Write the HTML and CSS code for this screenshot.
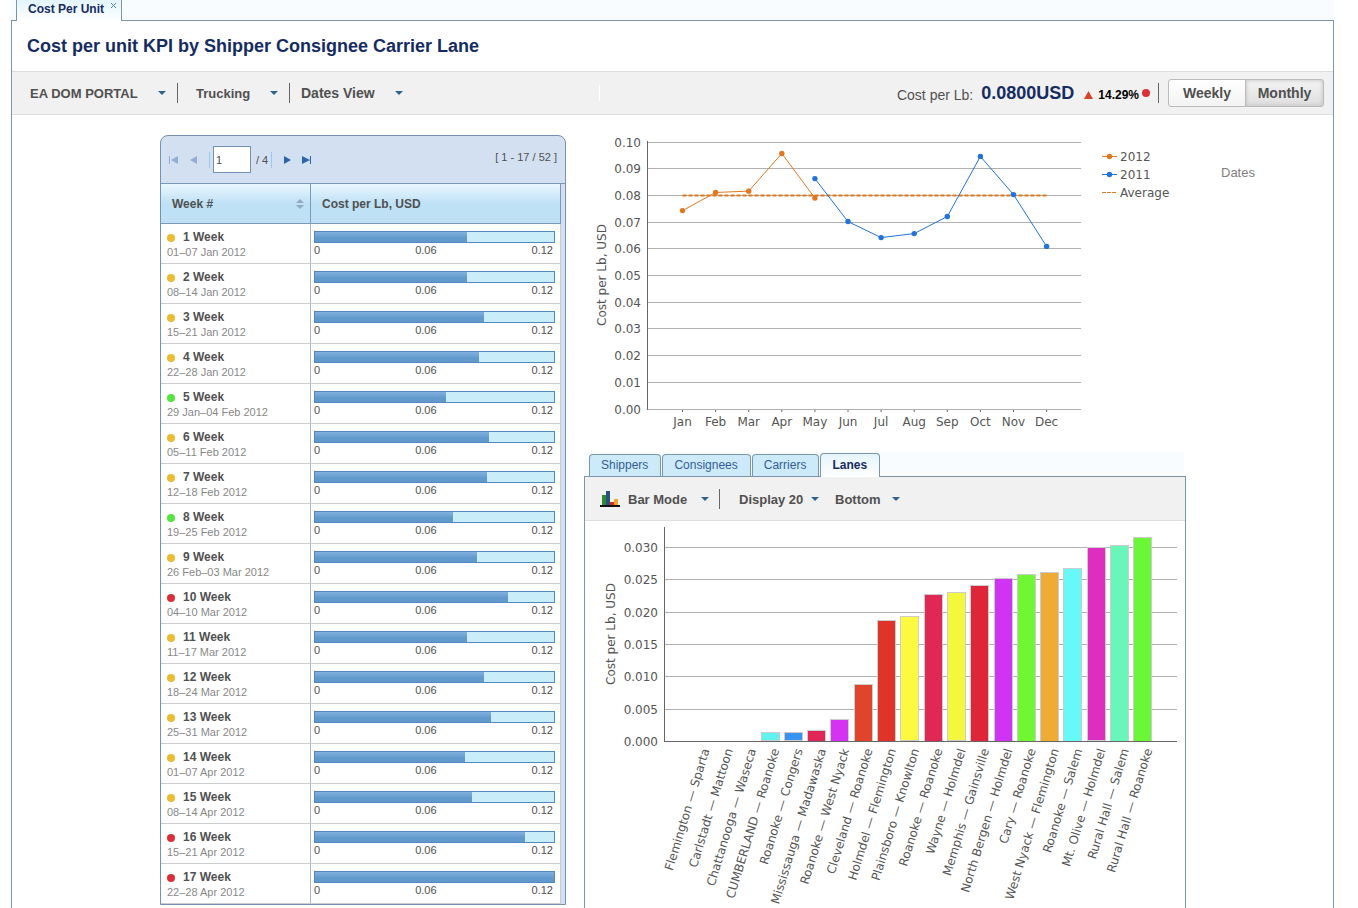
FILE: index.html
```html
<!DOCTYPE html>
<html lang="en">
<head>
<meta charset="utf-8">
<title>Cost Per Unit</title>
<link rel="stylesheet" href="styles.css">
</head>
<body>
<div class="app">
  <nav class="page-tabs" aria-label="Open pages">
    <div class="page-tab">
      <a class="page-tab-link" href="#cost">Cost Per Unit</a>
      <button class="page-tab-close" type="button" aria-label="Close tab"><svg width="7" height="7" viewBox="0 0 7 7"><path d="M1 1L6 6M6 1L1 6"/></svg></button>
    </div>
  </nav>

  <main class="page" id="cost">
    <h1 class="page-title">Cost per unit KPI by Shipper Consignee Carrier Lane</h1>

    <div class="toolbar">
      <label class="dropdown dropdown-portal"><select aria-label="Portal"><option>EA DOM PORTAL</option></select></label>
      <span class="divider"></span>
      <label class="dropdown dropdown-mode"><select aria-label="Mode"><option>Trucking</option></select></label>
      <span class="divider"></span>
      <label class="dropdown dropdown-dates"><select aria-label="View"><option>Dates View</option></select></label>
      <span class="divider divider-light"></span>
      <div class="kpi">
        <span class="kpi-label">Cost per Lb:</span>
        <strong class="kpi-value">0.0800USD</strong>
        <svg class="kpi-arrow" width="9" height="8" viewBox="0 0 9 8"><path d="M4.500 0L9 8H0Z"/></svg>
        <span class="kpi-change">14.29%</span>
        <span class="dot dot-red"></span>
      </div>
      <span class="divider"></span>
      <div class="period">
        <button class="period-button" type="button">Weekly</button>
        <button class="period-button period-active" type="button" aria-pressed="true">Monthly</button>
      </div>
    </div>

    <div class="content">
      <section class="weeks">
        <div class="pager">
          <button class="pager-button pager-off" type="button" aria-label="First page"><svg width="10" height="8" viewBox="0 0 10 8"><path d="M0 0H1V8H0ZM9 0V8L2 4Z"/></svg></button>
          <button class="pager-button pager-off" type="button" aria-label="Previous page"><svg width="8" height="8" viewBox="0 0 8 8"><path d="M7 0V8L0 4Z"/></svg></button>
          <span class="pager-line"></span>
          <input class="pager-input" type="text" value="1" aria-label="Page">
          <span class="pager-total">/ 4</span>
          <span class="pager-line"></span>
          <button class="pager-button" type="button" aria-label="Next page"><svg width="8" height="8" viewBox="0 0 8 8"><path d="M1 0V8L8 4Z"/></svg></button>
          <button class="pager-button" type="button" aria-label="Last page"><svg width="10" height="8" viewBox="0 0 10 8"><path d="M0 0V8L8 4ZM8 0H9V8H8Z"/></svg></button>
          <span class="pager-range">[ 1 - 17 / 52 ]</span>
        </div>
        <div class="weeks-body">
          <table class="weeks-table">
            <thead>
              <tr>
                <th class="col-week" scope="col"><div class="th-inner">Week #<svg class="sort" width="8" height="10" viewBox="0 0 8 10"><path d="M4 0L8 4H0ZM4 10L8 6H0Z"/></svg></div></th>
                <th scope="col">Cost per Lb, USD</th>
              </tr>
            </thead>
            <tbody id="weeks-rows"></tbody>
          </table>
        </div>
      </section>

      <div class="charts">
        <svg class="chart" id="line-chart" viewBox="0 0 602 306" role="img" aria-label="Cost per Lb by month"></svg>

        <section class="lanes">
          <nav class="lane-tabs">
            <a class="lane-tab" href="#shippers">Shippers</a>
            <a class="lane-tab" href="#consignees">Consignees</a>
            <a class="lane-tab" href="#carriers">Carriers</a>
            <a class="lane-tab lane-tab-active" href="#lanes">Lanes</a>
          </nav>
          <div class="lane-panel" id="lanes">
            <div class="lane-toolbar">
              <svg class="bar-icon" width="20" height="17" viewBox="0 0 20 17"><path fill="#2f8a2f" d="M2 4H6V14H2Z"/><path fill="#24517f" d="M6 0H10V14H6Z"/><path fill="#d8262c" d="M10 11H14V14H10Z"/><path fill="#eda52c" d="M14 8H18V14H14Z"/><path fill="#111" d="M0 14H20V16H0Z"/></svg>
              <label class="dropdown dropdown-bar"><select aria-label="Chart mode"><option>Bar Mode</option></select></label>
              <span class="divider"></span>
              <label class="dropdown dropdown-display"><select aria-label="Display count"><option>Display 20</option></select></label>
              <label class="dropdown dropdown-order"><select aria-label="Order"><option>Bottom</option></select></label>
            </div>
            <svg class="chart" id="bar-chart" viewBox="0 0 600 410" role="img" aria-label="Cost per Lb by lane"></svg>
          </div>
        </section>
      </div>

      <aside class="dates">Dates</aside>
    </div>
  </main>
</div>
<script src="script.js"></script>
</body>
</html>
```
FILE: styles.css
```css
* { box-sizing: border-box; }

body {
  margin: 0;
  height: 100vh;
  overflow: hidden;
  background: #fff;
  color: #505050;
  font-family: "Liberation Sans", Arial, sans-serif;
  font-size: 12px;
}

a { color: inherit; text-decoration: none; }

button, input, select {
  margin: 0;
  padding: 0;
  border: 0;
  background: none;
  color: inherit;
  font: inherit;
}

.app { padding: 0 24px 0 11px; }

.page-tabs {
  display: flex;
  height: 20px;
  padding-left: 5px;
  background: #f8fcfe;
}

.page-tab {
  display: flex;
  gap: 6px;
  height: 21px;
  padding: 0 4px 0 11px;
  border: solid #7b96a8;
  border-width: 0 1px;
  background: linear-gradient(#e2f4fd, #fff);
  z-index: 1;
}

.page-tab-link { color: #152c62; font-weight: bold; line-height: 18px; }
.page-tab-close { display: flex; padding-top: 2px; height: 12px; }
.page-tab-close path { stroke: #4f83ad; fill: none; }

.page {
  min-height: 100vh;
  border: 1px solid #7b96a8;
}

.page-title {
  margin: 0;
  padding: 1px 15px 0;
  color: #152c62;
  font-size: 18px;
  line-height: 49px;
}

.toolbar {
  display: flex;
  align-items: center;
  height: 44px;
  padding: 0 9px 0 18px;
  border: solid #dcdfe1;
  border-width: 1px 0;
  background: #f1f1f1;
}

.divider { width: 1px; height: 20px; background: #666; }
.divider-light { height: 16px; margin-left: 196px; background: #fff; }

.dropdown {
  display: flex;
  align-items: center;
  justify-content: space-between;
  font-size: 13px;
  font-weight: bold;
}

.dropdown select { appearance: none; outline-offset: 2px; }

.dropdown::after {
  content: "";
  border: 4px solid transparent;
  border-top-color: #2a6592;
  border-bottom: 0;
}

.dropdown-portal { width: 136px; margin-right: 11px; }
.dropdown-mode { width: 82px; margin: 0 11px 0 18px; }
.dropdown-dates { width: 102px; margin-left: 11px; font-size: 14px; }

.kpi {
  display: flex;
  align-items: center;
  gap: 8px;
  margin: 0 8px 0 auto;
}

.kpi-label { font-size: 14px; padding-top: 4px; }
.kpi-value { color: #152c62; font-size: 18px; }
.kpi-arrow { fill: #d8422a; margin: 3px -3px 0 2px; }
.kpi-change { margin-right: -5px; padding-top: 4px; color: #000; font-weight: bold; }

.dot { width: 8px; height: 8px; border-radius: 50%; flex: none; }
.dot-red { background: #dc3038; }
.dot-yellow { background: #edba34; }
.dot-green { background: #56e43e; }

.period { display: flex; margin-left: 9px; }

.period-button {
  height: 28px;
  width: 78px;
  border: 1px solid #bbb;
  border-radius: 3px 0 0 3px;
  background: linear-gradient(#fff, #f3f3f3);
  font-size: 14px;
  font-weight: bold;
}

.period-active {
  margin-left: -1px;
  width: 79px;
  border-radius: 0 3px 3px 0;
  background: linear-gradient(#f4f4f4, #dedede);
  box-shadow: inset 0 0 4px #bbb;
}

.content {
  display: grid;
  grid-template-columns: 406fr 18fr 602fr 35fr 112fr;
  align-items: start;
  padding: 15px 0 0 148px;
}

.weeks {
  grid-column: 1;
  margin-top: 5px;
  border: 1px solid #7590b0;
  border-radius: 8px 8px 0 0;
  background: #d3e0f1;
}

.pager {
  display: flex;
  align-items: center;
  height: 48px;
  padding: 0 8px;
  border-bottom: 1px solid #7d99b8;
  font-size: 11px;
}

.pager-button { display: flex; margin-right: 11px; fill: #2a66ae; }
.pager-off { fill: #8fb0d4; }
.pager-line { width: 1px; height: 16px; background: #8ecdf0; }

.pager-input {
  width: 38px;
  height: 27px;
  margin: 0 5px 0 3px;
  padding-left: 2px;
  border: 1px solid #7590b0;
  background: #fff;
}

.pager-total { margin-right: 3px; }
.pager-total + .pager-line { margin-right: 11px; }
.pager-range { margin-left: auto; padding-bottom: 6px; }

.weeks-body { padding-right: 4px; }

.weeks-table {
  width: 100%;
  table-layout: fixed;
  border-collapse: separate;
  border-spacing: 0;
  background: #fff;
}

.weeks-table th {
  height: 40px;
  padding: 0 6px 0 11px;
  border: solid #7d99b8;
  border-width: 0 1px 1px 0;
  background: linear-gradient(#e9f7fe, #bfe1f6 50%, #bfe1f6);
  text-align: left;
}

.weeks-table .col-week { width: 150px; }
.th-inner { display: flex; justify-content: space-between; align-items: center; }
.sort { fill: #94aac4; }

.weeks-table td {
  height: 40px;
  padding: 0 5px 0 3px;
  border: solid #c9cdd0;
  border-width: 0 1px 1px 0;
  vertical-align: top;
}

.weeks-table td:first-child { padding: 6px 0 0 6px; border-right-color: #a9b4c4; }

.week-name {
  display: flex;
  align-items: center;
  gap: 8px;
  font-weight: bold;
  line-height: 15px;
}

.week-range { color: #888; font-size: 11px; line-height: 15px; }

.meter {
  height: 12px;
  margin-top: 7px;
  border: 1px solid #5486bf;
  background: #c9eef9;
}

.meter-fill { height: 10px; background: linear-gradient(#82b1df, #6199cd 60%); }

.meter-scale {
  display: flex;
  justify-content: space-between;
  padding-right: 2px;
  font-size: 11px;
  line-height: 14px;
}

.charts { grid-column: 3; }

.chart {
  display: block;
  width: 100%;
  overflow: hidden;
  font-family: "DejaVu Sans", sans-serif;
  font-size: 12px;
  fill: #555;
}

.grid-line { stroke: #b0b0b0; }
.axis-line { stroke: #666; }
.series { fill: none; }
.average { stroke: #e07820; stroke-width: 2; stroke-dasharray: 4 2; }

.lanes { margin-top: 16px; }

.lane-tabs {
  display: flex;
  align-items: flex-end;
  gap: 1px;
  height: 24px;
  margin-right: 2px;
  padding-left: 5px;
  background: #f8fcfe;
}

.lane-tab {
  height: 22px;
  padding: 0 12px 0 11px;
  border: 1px solid #7b96a8;
  border-bottom: 0;
  border-radius: 4px 4px 0 0;
  background: #cdeafa;
  color: #345e94;
  line-height: 20px;
}

.lane-tab-active {
  height: 24px;
  margin-bottom: -1px;
  background: linear-gradient(#e4f4fc, #fff);
  color: #152c62;
  font-weight: bold;
  line-height: 22px;
  z-index: 1;
}

.lane-panel { border: 1px solid #7b96a8; }

.lane-toolbar {
  display: flex;
  align-items: center;
  height: 44px;
  padding: 1px 0 0 15px;
  border-bottom: 1px solid #dcdfe1;
  background: #f1f1f1;
}

.dropdown-bar { width: 81px; margin: 0 10px 0 8px; }
.dropdown-display { width: 80px; margin: 0 16px 0 19px; }
.dropdown-order { width: 65px; }

.dates {
  grid-column: 5;
  padding-top: 35px;
  color: #808080;
  font-size: 13px;
}
```
FILE: script.js
```js
const weeks = [
  ["yellow", "01–07 Jan 2012", 63.6], ["yellow", "08–14 Jan 2012", 63.6],
  ["yellow", "15–21 Jan 2012", 70.7], ["yellow", "22–28 Jan 2012", 68.6],
  ["green", "29 Jan–04 Feb 2012", 54.8], ["yellow", "05–11 Feb 2012", 72.8],
  ["yellow", "12–18 Feb 2012", 72], ["green", "19–25 Feb 2012", 57.7],
  ["yellow", "26 Feb–03 Mar 2012", 67.8], ["red", "04–10 Mar 2012", 80.8],
  ["yellow", "11–17 Mar 2012", 63.6], ["yellow", "18–24 Mar 2012", 70.7],
  ["yellow", "25–31 Mar 2012", 73.6], ["yellow", "01–07 Apr 2012", 62.8],
  ["yellow", "08–14 Apr 2012", 65.7], ["red", "15–21 Apr 2012", 87.9],
  ["red", "22–28 Apr 2012", 100]
];

document.getElementById("weeks-rows").innerHTML = weeks.map(([state, range, fill], i) => `
  <tr>
    <td><div class="week-name"><span class="dot dot-${state}"></span>${i + 1} Week</div><div class="week-range">${range}</div></td>
    <td><div class="meter"><div class="meter-fill" style="width:${fill}%"></div></div><div class="meter-scale"><span>0</span><span>0.06</span><span>0.12</span></div></td>
  </tr>`).join("");

const line = (x1, y1, x2, y2, cls) => `<line class="${cls}" x1="${x1}" y1="${y1}" x2="${x2}" y2="${y2}"/>`;
const text = (x, y, anchor, value, extra = "") => `<text x="${x}" y="${y}" text-anchor="${anchor}" ${extra}>${value}</text>`;

function drawLineChart() {
  const left = 63.5, right = 497, bottom = 279;
  const y = v => bottom - v * 2670;
  const x = i => 98.5 + i * 33.1;
  const months = ["Jan", "Feb", "Mar", "Apr", "May", "Jun", "Jul", "Aug", "Sep", "Oct", "Nov", "Dec"];
  let out = "";
  for (let i = 0; i <= 10; i++) {
    const gy = Math.floor(y(i / 100)) + 0.5;
    out += line(left, gy, right, gy, "grid-line") + text(57, gy + 4, "end", (i / 100).toFixed(2));
  }
  out += line(left, 11, left, 280, "axis-line");
  months.forEach((m, i) => {
    out += line(x(i), 280, x(i), 282, "axis-line") + text(x(i), 296, "middle", m);
  });
  out += text(0, 0, "middle", "Cost per Lb, USD", 'transform="translate(22 145) rotate(-90)"');
  out += line(x(0), y(0.08), x(11), y(0.08), "average");
  const series = (start, values, color) => {
    const points = values.map((v, i) => [x(start + i), y(v)]);
    out += `<polyline class="series" stroke="${color}" points="${points.join(" ")}"/>`;
    points.forEach(([px, py]) => { out += `<circle cx="${px}" cy="${py}" r="2.700" fill="${color}"/>`; });
  };
  series(0, [0.0743, 0.0811, 0.0816, 0.0957, 0.0790], "#e07820");
  series(4, [0.0863, 0.0702, 0.0642, 0.0657, 0.0721, 0.0946, 0.0803, 0.0609], "#2272dc");
  [["2012", "#e07820"], ["2011", "#2272dc"]].forEach(([name, color], i) => {
    const ly = 26.5 + i * 18;
    out += `<line x1="518" x2="533" y1="${ly}" y2="${ly}" stroke="${color}"/><circle cx="525.500" cy="${ly}" r="2.700" fill="${color}"/>`;
    out += text(536, ly + 4.5, "start", name);
  });
  out += `<line x1="518" x2="533" y1="62.500" y2="62.500" stroke="#e07820" stroke-dasharray="4 1"/>` + text(536, 67, "start", "Average");
  document.getElementById("line-chart").innerHTML = out;
}

function drawBarChart() {
  const left = 79.5, right = 592, bottom = 220.5;
  const lanes = [
    ["Flemington — Sparta", 0], ["Carlstadt — Mattoon", 0], ["Chattanooga — Waseca", 0],
    ["CUMBERLAND — Roanoke", 0.00125, "#5ff2ee"], ["Roanoke — Congers", 0.00125, "#3893f0"],
    ["Mississauga — Madawaska", 0.0017, "#de2657"], ["Roanoke — West Nyack", 0.0034, "#d433f2"],
    ["Cleveland — Roanoke", 0.0088, "#e0452b"], ["Holmdel — Flemington", 0.0187, "#df3428"],
    ["Plainsboro — Knowlton", 0.0192, "#fdf840"], ["Roanoke — Roanoke", 0.0227, "#df2853"],
    ["Wayne — Holmdel", 0.0229, "#f3f83f"], ["Memphis — Gainsville", 0.0241, "#df2639"],
    ["North Bergen — Holmdel", 0.0252, "#cf33f3"], ["Cary — Roanoke", 0.0258, "#70f632"],
    ["West Nyack — Flemington", 0.0261, "#eeac37"], ["Roanoke — Salem", 0.0267, "#67f9f8"],
    ["Mt. Olive — Holmdel", 0.0299, "#de2ec0"], ["Rural Hall — Salem", 0.0303, "#69f7b9"],
    ["Rural Hall — Roanoke", 0.0315, "#6bf638"]
  ];
  let out = "";
  for (let i = 0; i <= 6; i++) {
    const gy = Math.round(220 - i * 32.33) + 0.5;
    out += line(left, gy, right, gy, "grid-line") + text(73, gy + 4, "end", (i * 0.005).toFixed(3));
  }
  out += text(0, 0, "middle", "Cost per Lb, USD", 'transform="translate(30 113) rotate(-90)"');
  lanes.forEach(([name, value, color], i) => {
    const cx = 114.6 + i * 23.3;
    if (color) {
      const h = value * 6466;
      out += `<rect x="${Math.round(cx - 9) + 0.5}" y="${Math.round(bottom - h) - 0.5}" width="18" height="${Math.round(h)}" fill="${color}" stroke="#ccc"/>`;
    }
    out += text(0, 0, "end", name, `transform="translate(${cx + 10} 229) rotate(-73)"`);
  });
  out += line(left, 6, left, 221, "axis-line") + line(left, bottom, right, bottom, "axis-line");
  document.getElementById("bar-chart").innerHTML = out;
}

drawLineChart();
drawBarChart();
```
